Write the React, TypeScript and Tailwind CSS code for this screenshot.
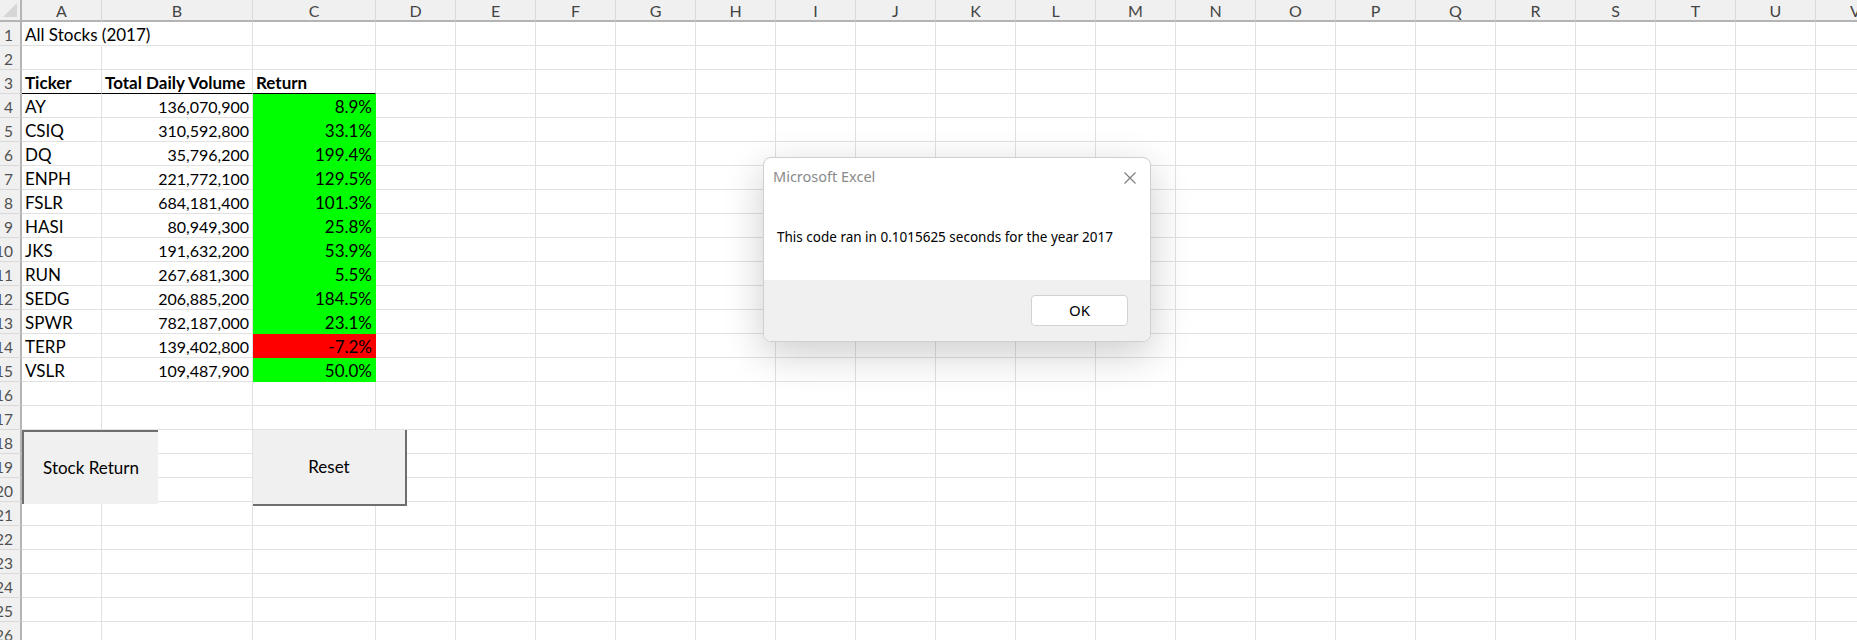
import clsx from "clsx";

const columns = ["A", "B", "C", "D", "E", "F", "G", "H", "I", "J", "K", "L", "M", "N", "O", "P", "Q", "R", "S", "T", "U", "V"];

const stocks = [
  ["AY", "136,070,900", "8.9%"],
  ["CSIQ", "310,592,800", "33.1%"],
  ["DQ", "35,796,200", "199.4%"],
  ["ENPH", "221,772,100", "129.5%"],
  ["FSLR", "684,181,400", "101.3%"],
  ["HASI", "80,949,300", "25.8%"],
  ["JKS", "191,632,200", "53.9%"],
  ["RUN", "267,681,300", "5.5%"],
  ["SEDG", "206,885,200", "184.5%"],
  ["SPWR", "782,187,000", "23.1%"],
  ["TERP", "139,402,800", "-7.2%"],
  ["VSLR", "109,487,900", "50.0%"],
];

const rowCount = 26;

function Cell({ row, col }: { row: number; col: number }) {
  let text = "";
  let right = false;
  let bold = false;
  let fill: "none" | "green" | "red" = "none";
  let underline = false;
  let spill = false;

  if (row === 1 && col === 0) {
    text = "All Stocks (2017)";
    spill = true;
  } else if (row === 3 && col < 3) {
    text = ["Ticker", "Total Daily Volume", "Return"][col];
    bold = true;
    underline = true;
  } else if (row >= 4 && row <= 15 && col < 3) {
    const s = stocks[row - 4];
    text = s[col];
    right = col > 0;
    if (col === 2) fill = s[2].startsWith("-") ? "red" : "green";
  }

  const volume = right && col === 1;

  return (
    <div
      className={clsx(
        "relative h-[24px] border-r border-b px-[3px] whitespace-nowrap text-black",
        volume ? "text-[16px] leading-[26px]" : "text-[17px] leading-[25px]",
        right && "text-right",
        bold && "font-bold",
        fill === "green" && "bg-[#00ff00] border-r-[#00ff00] border-b-[#00ff00]",
        fill === "red" && "bg-[#ff0000] border-r-[#ff0000] border-b-[#ff0000]",
        fill === "none" && underline && "border-r-[#e1e1e1] border-b-black",
        fill === "none" && !underline && spill && "border-r-transparent border-b-[#e1e1e1] z-10",
        fill === "none" && !underline && !spill && "border-r-[#e1e1e1] border-b-[#e1e1e1]"
      )}
    >
      {text}
    </div>
  );
}

function Sheet() {
  return (
    <div className="grid grid-cols-[22px_80px_151px_123px_repeat(19,80px)] font-['Lato',sans-serif]">
      <div className="relative h-[22px] bg-[#f0f0f0] border-r-2 border-b-2 border-[#b4b4b4]">
        <svg className="absolute left-[3px] top-[3px]" width="14" height="14" viewBox="0 0 14 14">
          <polygon points="14,0 14,14 0,14" fill="#d6d6d6" />
        </svg>
      </div>
      {columns.map((c) => (
        <div
          key={c}
          className="h-[22px] bg-[#f0f0f0] border-r border-r-[#d9d9d9] border-b-2 border-b-[#b4b4b4] text-center text-[16px] leading-[22px] text-[#444]"
        >
          {c}
        </div>
      ))}
      {Array.from({ length: rowCount }, (_, i) => i + 1).map((r) => (
        <div key={r} className="contents">
          <div className="flex h-[24px] justify-end overflow-hidden bg-[#f0f0f0] border-r-2 border-r-[#b4b4b4] border-b border-b-[#d9d9d9] pr-[7px] text-[15.5px] leading-[27px] whitespace-nowrap text-[#505050]">
            <span className="shrink-0">{r}</span>
          </div>
          {columns.map((c, ci) => (
            <Cell key={c} row={r} col={ci} />
          ))}
        </div>
      ))}
    </div>
  );
}

function MessageBox() {
  return (
    <div className="absolute left-[763px] top-[157px] z-30 flex h-[185px] w-[388px] flex-col overflow-hidden rounded-[8px] border border-[#cfcfcf] bg-white shadow-[0_12px_40px_rgba(0,0,0,0.2)] font-['Noto_Sans',sans-serif]">
      <div className="flex h-[39px] items-start justify-between pl-[9px] pr-[14px] pt-[8px]">
        <span className="text-[14.5px] leading-[20px] text-[#8a8a8a]">Microsoft Excel</span>
        <svg className="mt-[6px]" width="12" height="12" viewBox="0 0 12 12">
          <path d="M0.5 0.5 L11.5 11.5 M11.5 0.5 L0.5 11.5" stroke="#7a7a7a" strokeWidth="1.1" />
        </svg>
      </div>
      <div className="h-[83px] pl-[13px] pt-[30px] text-[13.5px] leading-[20px] text-black">
        This code ran in 0.1015625 seconds for the year 2017
      </div>
      <div className="flex flex-1 items-start justify-end bg-[#f0f0f0] pr-[22px] pt-[15px]">
        <button className="h-[31px] w-[97px] rounded-[4px] border border-[#d2d2d2] bg-white text-[15px] text-black">
          OK
        </button>
      </div>
    </div>
  );
}

export default function App() {
  return (
    <div className="relative h-[640px] w-[1857px] overflow-hidden bg-white">
      <Sheet />
      <button className="absolute left-[22px] top-[430px] z-20 flex h-[74px] w-[136px] items-center justify-center border-t-2 border-l-2 border-[#6e6e6e] bg-[#f0f0f0] text-[17px] text-black font-['Lato',sans-serif]">
        Stock Return
      </button>
      <button className="absolute left-[253px] top-[430px] z-20 flex h-[76px] w-[154px] items-center justify-center border-r-2 border-b-2 border-[#6e6e6e] bg-[#f0f0f0] text-[17px] text-black font-['Lato',sans-serif]">
        Reset
      </button>
      <MessageBox />
    </div>
  );
}
